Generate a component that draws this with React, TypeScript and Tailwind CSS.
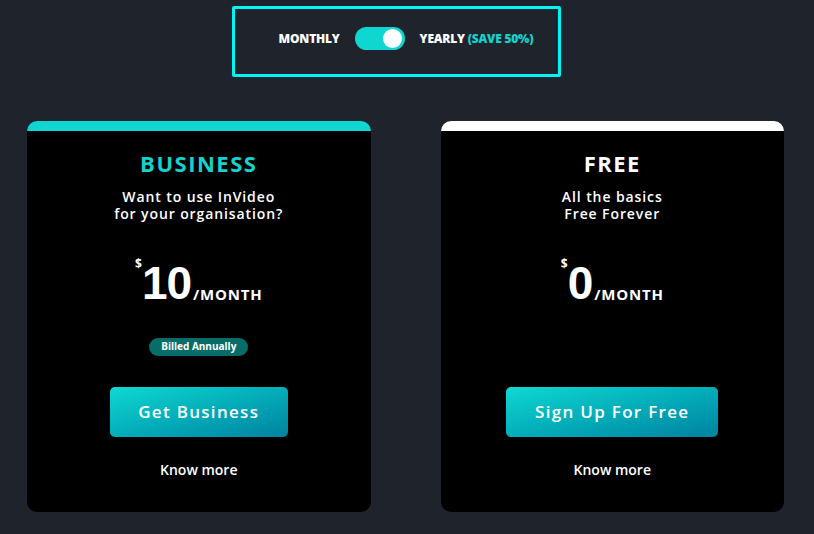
import React from 'react';

type Plan = {
  name: string;
  nameColor: string;
  barColor: string;
  lines: string[];
  price: string;
  billed: boolean;
  cta: string;
  ctaWidth: string;
};

const plans: Plan[] = [
  {
    name: 'BUSINESS',
    nameColor: 'text-[#14d2cc]',
    barColor: 'bg-[#0fd6d0]',
    lines: ['Want to use InVideo', 'for your organisation?'],
    price: '10',
    billed: true,
    cta: 'Get Business',
    ctaWidth: 'w-[178px]',
  },
  {
    name: 'FREE',
    nameColor: 'text-white',
    barColor: 'bg-white',
    lines: ['All the basics', 'Free Forever'],
    price: '0',
    billed: false,
    cta: 'Sign Up For Free',
    ctaWidth: 'w-[212px]',
  },
];

function PlanCard({ plan }: { plan: Plan }) {
  return (
    <div className="w-[344px] h-[391px] bg-black rounded-[10px] overflow-hidden flex flex-col items-center">
      <div className={`w-full h-[10px] ${plan.barColor}`}></div>
      <h3 className={`mt-[18px] text-[22px] leading-[28px] font-bold tracking-[1.5px] ${plan.nameColor}`}>
        {plan.name}
      </h3>
      <p className="mt-[11px] text-[14px] leading-[17px] font-semibold tracking-[0.9px] text-white text-center">
        {plan.lines[0]}
        <br />
        {plan.lines[1]}
      </p>
      <div className="mt-[34px] h-[50px] flex items-end text-white">
        <span className="self-start mt-[2px] text-[12px] leading-[12px] font-bold">$</span>
        <span className="text-[46px] leading-[46px] font-bold tracking-[-1px] font-['Liberation_Sans',sans-serif]">
          {plan.price}
        </span>
        <span className="ml-[2px] mb-[4px] text-[15px] leading-[15px] font-bold tracking-[0.8px]">/MONTH</span>
      </div>
      <div className="mt-[26px] h-[18px]">
        {plan.billed && (
          <span className="inline-flex items-center h-[18px] px-[12px] rounded-full bg-[#086d69] text-white text-[10px] font-bold">
            Billed Annually
          </span>
        )}
      </div>
      <button
        className={`mt-[37px] h-[50px] ${plan.ctaWidth} rounded-[5px] bg-gradient-to-br from-[#10d9d2] to-[#0083a0] text-white text-[17px] font-semibold tracking-[1.3px]`}
      >
        {plan.cta}
      </button>
      <a className="mt-[24px] text-[14px] leading-[17px] font-semibold text-white">Know more</a>
    </div>
  );
}

export default function App() {
  return (
    <div className="min-h-screen bg-[#1f242c] font-['Open_Sans',sans-serif] pt-[6px] pl-[27px] pr-[30px] pb-[22px]">
      <div className="ml-[205px] w-[329px] h-[71px] border-[3px] border-[#00f5f5] rounded-[2px] flex items-center justify-center gap-[15px] pl-[19px] pb-[6px] text-[12px] font-extrabold text-white">
        <span className="tracking-[-0.2px]">MONTHLY</span>
        <div className="w-[50px] h-[23px] rounded-full bg-[#0fd6d0] flex items-center justify-end pr-[3px]">
          <div className="w-[19px] h-[19px] rounded-full bg-white"></div>
        </div>
        <span className="tracking-[-0.2px]">
          YEARLY <span className="text-[#14d2cc]">(SAVE 50%)</span>
        </span>
      </div>
      <div className="mt-[44px] flex gap-[70px]">
        {plans.map((p) => (
          <PlanCard key={p.name} plan={p} />
        ))}
      </div>
    </div>
  );
}
